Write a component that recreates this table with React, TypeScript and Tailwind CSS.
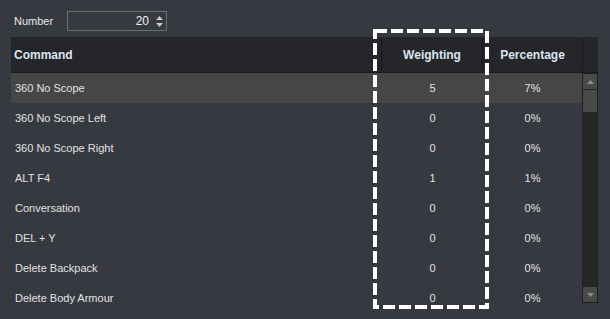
const rows = [
  { command: "360 No Scope", weighting: 5, pct: "7%" },
  { command: "360 No Scope Left", weighting: 0, pct: "0%" },
  { command: "360 No Scope Right", weighting: 0, pct: "0%" },
  { command: "ALT F4", weighting: 1, pct: "1%" },
  { command: "Conversation", weighting: 0, pct: "0%" },
  { command: "DEL + Y", weighting: 0, pct: "0%" },
  { command: "Delete Backpack", weighting: 0, pct: "0%" },
  { command: "Delete Body Armour", weighting: 0, pct: "0%" },
];

function Spinner() {
  return (
    <div className="flex flex-col items-center gap-[3px]">
      <svg width="7" height="4" viewBox="0 0 7 4">
        <path d="M3.5 0 L7 4 L0 4 Z" fill="#c8c8c8" />
      </svg>
      <svg width="7" height="4" viewBox="0 0 7 4">
        <path d="M0 0 L7 0 L3.5 4 Z" fill="#c8c8c8" />
      </svg>
    </div>
  );
}

function Scrollbar() {
  return (
    <div className="flex h-[230px] w-[16px] flex-col border border-[#1e1f21] bg-[#262626]">
      <div className="flex h-[15px] items-center justify-center bg-[#4a4a4a]">
        <svg width="7" height="4" viewBox="0 0 7 4">
          <path d="M3.5 0 L7 4 L0 4 Z" fill="#8e8e8e" />
        </svg>
      </div>
      <div className="mt-[1px] h-[22px] bg-[#4a4a4a]" />
      <div className="flex-1" />
      <div className="flex h-[15px] items-center justify-center bg-[#4a4a4a]">
        <svg width="7" height="4" viewBox="0 0 7 4">
          <path d="M0 0 L7 0 L3.5 4 Z" fill="#8e8e8e" />
        </svg>
      </div>
    </div>
  );
}

export default function App() {
  return (
    <div className="relative h-[319px] w-[610px] overflow-hidden bg-[#363940] font-['Liberation_Sans',Arial,sans-serif] text-[11px] text-[#e2e2e2]">
      <div className="flex items-center pt-[11px]">
        <span className="w-[67px] pl-[14px] text-[#e8e8e8]">Number</span>
        <div className="flex h-[20px] w-[100px] items-center justify-end border border-[#6a6d72] pr-[3px]">
          <span className="mr-[7px] text-[12px] text-[#f0f0f0]">20</span>
          <Spinner />
        </div>
      </div>

      <div className="ml-[11px] mt-[6px] w-[587px]">
        <div className="flex h-[36px] items-center border-b border-[#1b1c1e] bg-[#25262a] text-[12px] font-bold text-[#dce4ee]">
          <div className="w-[370px] pl-[3px]">Command</div>
          <div className="h-[31px] w-px bg-[#17181a]" />
          <div className="w-[100px] text-center">Weighting</div>
          <div className="h-[31px] w-px bg-[#17181a]" />
          <div className="w-[99px] text-center">Percentage</div>
          <div className="h-[31px] w-px bg-[#17181a]" />
        </div>

        <div className="flex h-[240px] items-start">
          <div className="w-[571px]">
            {rows.map((r, i) => (
              <div
                key={r.command}
                className={
                  i === 0
                    ? "flex h-[30px] items-center bg-[#464646]"
                    : "flex h-[30px] items-center"
                }
              >
                <div className="w-[371px] pl-[4px]">{r.command}</div>
                <div className="w-[101px] text-center">{r.weighting}</div>
                <div className="w-[99px] text-center">{r.pct}</div>
              </div>
            ))}
          </div>
          <Scrollbar />
        </div>
      </div>

      <svg className="pointer-events-none absolute left-0 top-0" width="610" height="319">
        <rect
          x="375"
          y="31"
          width="112"
          height="276"
          fill="none"
          stroke="#ffffff"
          strokeWidth="4"
          strokeDasharray="12 4"
        />
      </svg>
    </div>
  );
}
